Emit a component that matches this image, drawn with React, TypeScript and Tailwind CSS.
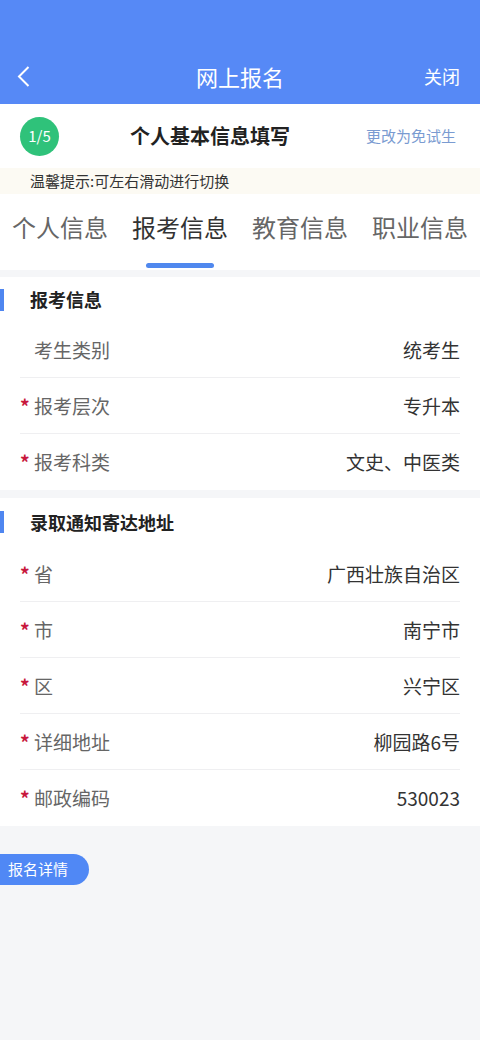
import React from 'react';

const font = { fontFamily: '"Noto Sans CJK SC", "Noto Sans", sans-serif' };

type Row = { label: string; value: string; required?: boolean };

const examRows: Row[] = [
  { label: '考生类别', value: '统考生' },
  { label: '报考层次', value: '专升本', required: true },
  { label: '报考科类', value: '文史、中医类', required: true },
];

const addressRows: Row[] = [
  { label: '省', value: '广西壮族自治区', required: true },
  { label: '市', value: '南宁市', required: true },
  { label: '区', value: '兴宁区', required: true },
  { label: '详细地址', value: '柳园路6号', required: true },
  { label: '邮政编码', value: '530023', required: true },
];

const tabs = ['个人信息', '报考信息', '教育信息', '职业信息'];

function FieldRow({ row, last }: { row: Row; last: boolean }) {
  return (
    <div className="mx-[20px] h-[56px] flex items-center relative">
      <span className="w-[14px] h-full flex items-center text-[#c8183c] text-[19px] font-bold leading-none pb-[2px]">
        {row.required ? '*' : ''}
      </span>
      <span className="text-[19px] text-[#666]">{row.label}</span>
      <span className="ml-auto text-[19px] text-[#333]">{row.value}</span>
      {!last && <div className="absolute left-0 right-0 bottom-0 h-px bg-[#efeff1]" />}
    </div>
  );
}

function Section({ title, rows, headerH }: { title: string; rows: Row[]; headerH: string }) {
  return (
    <div className="bg-white">
      <div className={`${headerH} flex items-center`}>
        <div className="w-[4px] h-[22px] bg-[#4f86f0]" />
        <span className="ml-[26px] text-[18px] font-bold text-[#222]">{title}</span>
      </div>
      {rows.map((r, i) => (
        <FieldRow key={r.label} row={r} last={i === rows.length - 1} />
      ))}
    </div>
  );
}

export default function App() {
  return (
    <div className="w-[480px] min-h-[1040px] bg-[#f5f6f8]" style={font}>
      {/* Top bar */}
      <div className="h-[104px] bg-[#5689f6] flex flex-col justify-end">
        <div className="h-[52px] flex items-center px-[17px] pb-[3px] relative">
          <svg width="13" height="21" viewBox="0 0 13 21" fill="none">
            <path d="M11.5 1L2 10.5L11.5 20" stroke="white" strokeWidth="2" />
          </svg>
          <span className="absolute left-0 right-0 text-center text-[22px] text-white">网上报名</span>
          <span className="ml-auto mr-[3px] text-[18px] text-white relative">关闭</span>
        </div>
      </div>

      {/* Step bar */}
      <div className="h-[64px] bg-white flex items-center pl-[20px] pr-[24px]">
        <div className="w-[39px] h-[39px] rounded-full bg-[#2fc27a] flex items-center justify-center text-white text-[15px]">
          1/5
        </div>
        <span className="ml-[71px] text-[20px] font-bold text-[#222]">个人基本信息填写</span>
        <span className="ml-auto text-[15px] text-[#7a9bd1]">更改为免试生</span>
      </div>

      {/* Notice */}
      <div className="h-[26px] bg-[#fcfaf3] flex items-center pl-[30px] text-[15px] text-[#333]">
        温馨提示:可左右滑动进行切换
      </div>

      {/* Tabs */}
      <div className="h-[76px] bg-white flex gap-[24px] pl-[12px]">
        {tabs.map((t, i) => (
          <div key={t} className="flex flex-col items-center">
            <span className={`mt-[16px] text-[24px] leading-[34px] whitespace-nowrap ${i === 1 ? 'text-[#333]' : 'text-[#666]'}`}>
              {t}
            </span>
            {i === 1 && <div className="mt-[19px] w-[68px] h-[5px] rounded-full bg-[#5088ee]" />}
          </div>
        ))}
      </div>

      <div className="h-[7px]" />
      <Section title="报考信息" rows={examRows} headerH="h-[45px]" />
      <div className="h-[8px]" />
      <Section title="录取通知寄达地址" rows={addressRows} headerH="h-[48px]" />

      {/* Bottom pill */}
      <div className="pt-[28px]">
        <div className="w-[89px] h-[31px] rounded-r-full bg-[#5088f5] flex items-center pl-[8px] text-[15px] text-white">
          报名详情
        </div>
      </div>
    </div>
  );
}
